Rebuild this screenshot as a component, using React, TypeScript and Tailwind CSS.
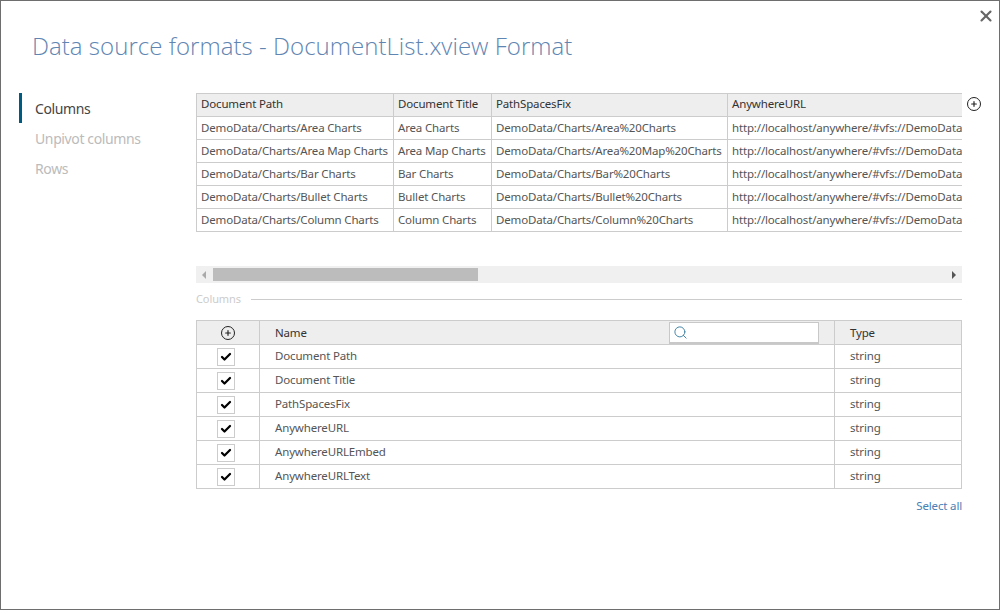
import React from 'react';
import { Plus, Search, X, Check } from 'lucide-react';

const previewRows = [
  ['DemoData/Charts/Area Charts', 'Area Charts', 'DemoData/Charts/Area%20Charts'],
  ['DemoData/Charts/Area Map Charts', 'Area Map Charts', 'DemoData/Charts/Area%20Map%20Charts'],
  ['DemoData/Charts/Bar Charts', 'Bar Charts', 'DemoData/Charts/Bar%20Charts'],
  ['DemoData/Charts/Bullet Charts', 'Bullet Charts', 'DemoData/Charts/Bullet%20Charts'],
  ['DemoData/Charts/Column Charts', 'Column Charts', 'DemoData/Charts/Column%20Charts']
];

const columns = ['Document Path', 'Document Title', 'PathSpacesFix', 'AnywhereURL', 'AnywhereURLEmbed', 'AnywhereURLText'];

const PlusCircle = () => (
  <span className="flex h-[14px] w-[14px] items-center justify-center rounded-full border border-[#222]">
    <Plus className="h-2 w-2 text-[#222]" strokeWidth={3.5} />
  </span>
);

const PreviewRow = ({ cells, url }: { cells: string[]; url: string }) => (
  <div className="flex h-[23px] border-b border-[#ccc]">
    <div className="w-[198px] shrink-0 border-l border-r border-[#ccc] pl-1 leading-[22px] whitespace-nowrap">{cells[0]}</div>
    <div className="w-[98px] shrink-0 border-r border-[#ccc] pl-1 leading-[22px] whitespace-nowrap">{cells[1]}</div>
    <div className="w-[236px] shrink-0 border-r border-[#ccc] pl-1 leading-[22px] whitespace-nowrap">{cells[2]}</div>
    <div className="pl-1 leading-[22px] whitespace-nowrap">{url}</div>
  </div>
);

export default function App() {
  return (
    <div className="relative h-[610px] w-[1000px] overflow-hidden border border-[#6e6e6e] bg-white font-['Noto_Sans','Open_Sans',sans-serif] text-[11.5px] tracking-[-0.16px] text-[#555]">
      <button className="absolute right-[4px] top-[6px] text-[#666]">
        <X className="h-[18px] w-[18px]" strokeWidth={2.8} />
      </button>

      <h1 className="pl-[31px] pt-[28px] text-[24px] leading-[33px] font-light tracking-[0.04px] text-[#5f86b3] font-['Open_Sans',sans-serif]">
        Data source formats - DocumentList.xview Format
      </h1>

      <div className="flex pt-[31px]">
        <nav className="w-[194px] shrink-0 pl-[18px] text-[14px] tracking-[-0.38px]">
          <div className="h-[30px] border-l-[3px] border-[#005b82] pl-[13px] leading-[32px] text-[#444]">Columns</div>
          <div className="h-[30px] pl-[16px] leading-[32px] text-[#bbb]">Unpivot columns</div>
          <div className="h-[30px] pl-[16px] leading-[32px] text-[#bbb]">Rows</div>
        </nav>

        <div className="w-[767px] shrink-0 pl-[1px]">
          <div className="relative">
            <div className="w-[766px] overflow-hidden">
              <div className="w-[1000px]">
                <div className="flex h-[24px] border-y border-[#ccc] bg-[#eee] text-[#333]">
                  <div className="w-[198px] shrink-0 border-l border-r border-[#ccc] pl-1 leading-[20px]">Document Path</div>
                  <div className="w-[98px] shrink-0 border-r border-[#ccc] pl-1 leading-[20px]">Document Title</div>
                  <div className="w-[236px] shrink-0 border-r border-[#ccc] pl-1 leading-[20px]">PathSpacesFix</div>
                  <div className="pl-1 leading-[20px]">AnywhereURL</div>
                </div>
                {previewRows.map(cells => (
                  <PreviewRow key={cells[0]} cells={cells} url="http://localhost/anywhere/#vfs://DemoData/Charts" />
                ))}
              </div>
            </div>
            <span className="absolute left-[771px] top-[4px]">
              <PlusCircle />
            </span>
          </div>

          <div className="mt-[34px] flex h-[17px] items-center bg-[#f0f0f0]">
            <span className="ml-[6px] h-0 w-0 border-y-[4px] border-r-[4px] border-y-transparent border-r-[#aaa]" />
            <div className="ml-[7px] h-[13px] w-[265px] bg-[#bcbcbc]" />
            <span className="ml-auto mr-[6px] h-0 w-0 border-y-[4px] border-l-[4px] border-y-transparent border-l-[#555]" />
          </div>

          <div className="mt-[7px] flex h-[18px] items-center text-[11px] tracking-[-0.1px] text-[#ccc]">
            <span>Columns</span>
            <div className="ml-[10px] h-px flex-1 bg-[#ccc]" />
          </div>

          <div className="mt-[12px] border border-b-0 border-[#ccc]">
            <div className="flex h-[24px] border-b border-[#ccc] bg-[#eee] text-[#333]">
              <div className="flex w-[63px] shrink-0 items-center justify-center border-r border-[#ccc]">
                <PlusCircle />
              </div>
              <div className="flex flex-1 items-center justify-between border-r border-[#ccc] pl-[15px] pr-[15px]">
                <span>Name</span>
                <div className="flex h-[22px] w-[150px] items-center border border-b-2 border-[#c8c8c8] bg-white pl-[3px]">
                  <Search className="h-[15px] w-[15px] text-[#3b7ea1]" strokeWidth={1.5} />
                </div>
              </div>
              <div className="w-[126px] shrink-0 pl-[15px] leading-[23px]">Type</div>
            </div>
            {columns.map(name => (
              <div key={name} className="flex h-[24px] border-b border-[#ccc]">
                <div className="flex w-[63px] shrink-0 items-center justify-center border-r border-[#ccc]">
                  <span className="mr-[4px] flex h-[18px] w-[18px] items-center justify-center border border-[#ccc] bg-white">
                    <Check className="h-3 w-3 text-black" strokeWidth={4.5} />
                  </span>
                </div>
                <div className="flex-1 border-r border-[#ccc] pl-[15px] leading-[22px]">{name}</div>
                <div className="w-[126px] shrink-0 pl-[15px] leading-[22px]">string</div>
              </div>
            ))}
          </div>

          <div className="mt-[8px] text-right leading-[18px] text-[#4a7fb5]">Select all</div>
        </div>
      </div>
    </div>
  );
}
